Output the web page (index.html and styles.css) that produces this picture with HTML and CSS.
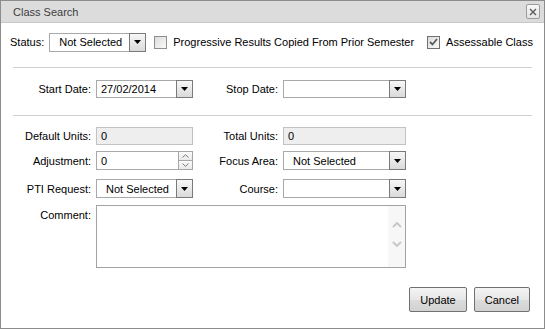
FILE: index.html
```html
<!DOCTYPE html>
<html lang="en">
<head>
  <meta charset="UTF-8">
  <title>Class Search</title>
  <link rel="stylesheet" href="styles.css">
</head>
<body>
  <div class="dialog">
    <div class="titlebar">
      <span class="title">Class Search</span>
      <a href="#" class="close">
        <svg width="8" height="8" viewBox="0 0 8 8"><path d="M1 1L7 7M7 1L1 7" stroke="#5a5a5a" stroke-width="1.4" fill="none"/></svg>
      </a>
    </div>

    <div class="content">
      <div class="row-top">
        <span class="lbl">Status:</span>
        <div class="select status-select">
          <span class="val">Not Selected</span>
          <span class="arrow"><svg width="7" height="4" viewBox="0 0 7 4"><path d="M0 0H7L3.5 4Z" fill="#000"/></svg></span>
        </div>
        <span class="check"></span>
        <span class="check-text">Progressive Results Copied From Prior Semester</span>
        <span class="check checked">
          <svg width="9" height="8" viewBox="0 0 9 8"><path d="M1 4L3.5 6.5L8 1" stroke="#5c5c5c" stroke-width="1.8" fill="none"/></svg>
        </span>
        <span class="check-text">Assessable Class</span>
      </div>

      <div class="sep sep-1"></div>

      <div class="frow date-row">
        <span class="lbl">Start Date:</span>
        <div class="select date-select">
          <span class="val date-val">27/02/2014</span>
          <span class="arrow"><svg width="7" height="4" viewBox="0 0 7 4"><path d="M0 0H7L3.5 4Z" fill="#000"/></svg></span>
        </div>
        <span class="lbl">Stop Date:</span>
        <div class="select date-select">
          <span class="val"></span>
          <span class="arrow"><svg width="7" height="4" viewBox="0 0 7 4"><path d="M0 0H7L3.5 4Z" fill="#000"/></svg></span>
        </div>
      </div>

      <div class="sep sep-2"></div>

      <div class="frow units-row">
        <span class="lbl">Default Units:</span>
        <div class="input disabled">0</div>
        <span class="lbl">Total Units:</span>
        <div class="input disabled">0</div>
      </div>

      <div class="frow adjust-row">
        <span class="lbl">Adjustment:</span>
        <div class="input spin-input">
          <span class="spin-val">0</span>
          <span class="spinner">
            <span class="spin-btn"><svg width="7" height="4" viewBox="0 0 7 4"><path d="M0.5 3.5L3.5 0.7L6.5 3.5" stroke="#7a7a7a" stroke-width="1" fill="none"/></svg></span>
            <span class="spin-btn"><svg width="7" height="4" viewBox="0 0 7 4"><path d="M0.5 0.5L3.5 3.3L6.5 0.5" stroke="#7a7a7a" stroke-width="1" fill="none"/></svg></span>
          </span>
        </div>
        <span class="lbl">Focus Area:</span>
        <div class="select">
          <span class="val">Not Selected</span>
          <span class="arrow"><svg width="7" height="4" viewBox="0 0 7 4"><path d="M0 0H7L3.5 4Z" fill="#000"/></svg></span>
        </div>
      </div>

      <div class="frow pti-row">
        <span class="lbl">PTI Request:</span>
        <div class="select">
          <span class="val">Not Selected</span>
          <span class="arrow"><svg width="7" height="4" viewBox="0 0 7 4"><path d="M0 0H7L3.5 4Z" fill="#000"/></svg></span>
        </div>
        <span class="lbl">Course:</span>
        <div class="select">
          <span class="val"></span>
          <span class="arrow"><svg width="7" height="4" viewBox="0 0 7 4"><path d="M0 0H7L3.5 4Z" fill="#000"/></svg></span>
        </div>
      </div>

      <div class="frow comment-row">
        <span class="lbl lbl-top">Comment:</span>
        <div class="textarea">
          <span class="ta-text"></span>
          <span class="scroller">
            <svg width="10" height="7" viewBox="0 0 10 7"><path d="M1 6L5 2L9 6" stroke="#c6c6c6" stroke-width="1.8" fill="none"/></svg>
            <svg width="10" height="7" viewBox="0 0 10 7"><path d="M1 1L5 5L9 1" stroke="#c6c6c6" stroke-width="1.8" fill="none"/></svg>
          </span>
        </div>
      </div>

      <div class="actions">
        <button class="btn">Update</button>
        <button class="btn">Cancel</button>
      </div>
    </div>
  </div>
</body>
</html>
```

FILE: styles.css
```css
body {
  margin: 0;
  font: 11px "Liberation Sans", Arial, sans-serif;
  color: #000;
  background: #fff;
}

.dialog {
  width: 545px;
  height: 329px;
  box-sizing: border-box;
  border: 1px solid #8c8c8c;
  display: flex;
  flex-direction: column;
}

.titlebar {
  height: 21px;
  background: #dcdcdc;
  border-bottom: 1px solid #c8c8c8;
  display: flex;
  align-items: center;
  justify-content: space-between;
  padding: 0 4px 0 12px;
}
.titlebar .title {
  color: #3c3c3c;
}
.titlebar .close {
  width: 12px;
  height: 13px;
  border: 1px solid #9c9c9c;
  border-radius: 2px;
  background: linear-gradient(#f8f8f8, #e4e4e4);
  display: flex;
  align-items: center;
  justify-content: center;
}

.content {
  flex: 1;
  display: flex;
  flex-direction: column;
  padding: 10px 12px 0;
}

/* first line: status + two checkboxes */
.row-top {
  display: flex;
  align-items: center;
  height: 18px;
  margin-left: -3px;
  white-space: nowrap;
}
.row-top > * {
  flex-shrink: 0;
}
.row-top .lbl {
  margin-right: 5px;
}
.status-select {
  width: 97px;
  height: 19px;
  box-sizing: border-box;
}
.status-select .val {
  padding-left: 8px;
}
.check {
  width: 11px;
  height: 11px;
  border: 1px solid #8e8e8e;
  background: linear-gradient(135deg, #dcdcdc, #fafafa);
  display: flex;
  align-items: center;
  justify-content: center;
  margin-left: 8px;
  margin-right: 6px;
}
.check.checked {
  margin-left: 13px;
  border-color: #707070;
}

.sep {
  height: 1px;
  background: #cfcfcf;
}
.sep-1 {
  margin-top: 16px;
}
.sep-2 {
  margin-top: 17px;
}

/* form rows share the same four columns */
.frow {
  display: grid;
  grid-template-columns: 78px 97px 80px 123px;
  column-gap: 5px;
  align-items: center;
  white-space: nowrap;
}
.frow .lbl {
  text-align: right;
}
.date-row {
  margin-top: 12px;
}
.units-row {
  margin-top: 11px;
}
.adjust-row {
  margin-top: 6px;
}
.pti-row {
  margin-top: 9px;
}
.comment-row {
  margin-top: 7px;
  align-items: start;
}
.lbl-top {
  padding-top: 4px;
}

.select {
  display: flex;
  align-items: center;
  height: 19px;
  box-sizing: border-box;
  border: 1px solid #a9a9a9;
  background: #fff;
}
.select .val {
  flex: 1;
  padding-left: 9px;
}
.select .date-val {
  padding-left: 4px;
}
.select .arrow {
  align-self: stretch;
  width: 15px;
  margin: -1px -1px -1px 0;
  border: 1px solid #7a7a7a;
  background: linear-gradient(#f7f7f7, #dadada);
  display: flex;
  align-items: center;
  justify-content: center;
}
.date-select {
  height: 18px;
}

.input {
  height: 19px;
  box-sizing: border-box;
  border: 1px solid #a9a9a9;
  padding-left: 4px;
  display: flex;
  align-items: center;
}
.input.disabled {
  height: 18px;
  background: #eeeeee;
  border-color: #c2c2c2;
}
.spin-input .spin-val {
  flex: 1;
}
.spinner {
  align-self: stretch;
  width: 15px;
  margin: -1px -1px -1px 0;
  display: flex;
  flex-direction: column;
}
.spin-btn {
  flex: 1;
  border: 1px solid #a6a6a6;
  background: linear-gradient(#fbfbfb, #e9e9e9);
  display: flex;
  align-items: center;
  justify-content: center;
}
.spin-btn + .spin-btn {
  border-top: none;
}

.textarea {
  grid-column: 2 / 5;
  height: 63px;
  box-sizing: border-box;
  border: 1px solid #a3a3a3;
  display: flex;
}
.textarea .ta-text {
  flex: 1;
}
.scroller {
  width: 17px;
  background: #f7f7f7;
  display: flex;
  flex-direction: column;
  align-items: center;
  padding-top: 15px;
  gap: 13px;
}

.actions {
  display: flex;
  justify-content: flex-end;
  gap: 7px;
  margin-top: 19px;
  padding-right: 2px;
}
.btn {
  height: 25px;
  padding: 0 10px;
  font: inherit;
  color: #000;
  border: 1px solid #707070;
  border-radius: 2px;
  background: linear-gradient(#f4f4f4, #e6e6e6 50%, #dcdcdc 51%, #d2d2d2);
}
```
